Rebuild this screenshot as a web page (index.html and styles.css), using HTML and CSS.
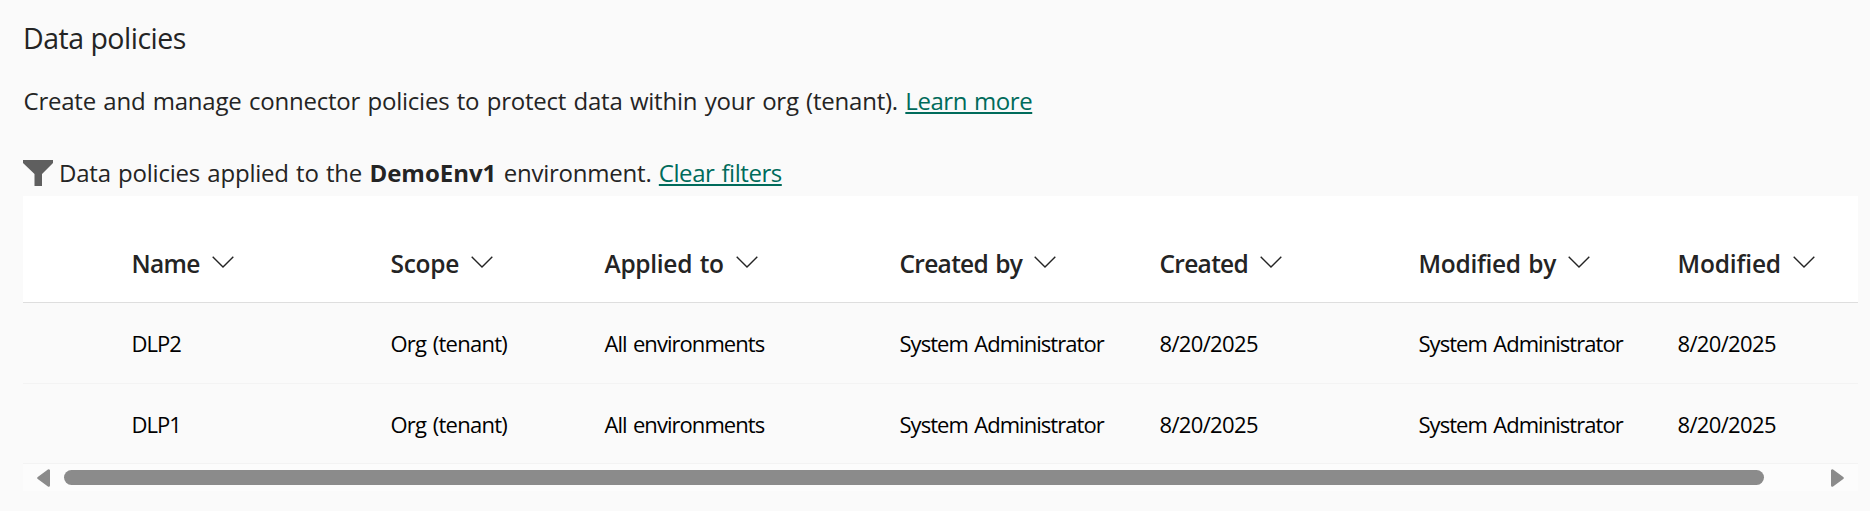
FILE: index.html
```html
<!DOCTYPE html>
<html lang="en">
<head>
<meta charset="utf-8">
<title>Data policies</title>
<link rel="stylesheet" href="styles.css">
</head>
<body>
<svg class="defs" width="0" height="0" aria-hidden="true">
  <symbol id="chevron" viewBox="0 0 22 12"><path d="M0.7 0.7 L11 11 L21.3 0.7" fill="none" stroke="currentColor" stroke-width="1.4"/></symbol>
</svg>
<main class="page">
  <h1 class="title">Data policies</h1>
  <p class="intro">Create and manage connector policies to protect data within your org (tenant). <a class="link" href="#">Learn more</a></p>
  <div class="filter">
    <svg class="funnel" viewBox="0 0 30 26"><path d="M0 0H30V3L19 14V26H11.500V14L0 3Z" fill="#5f5f5f"/></svg>
    <p class="filter-text">Data policies applied to the <b class="env">DemoEnv1</b> environment. <a class="link" href="#">Clear filters</a></p>
  </div>
  <section class="grid">
    <div class="row head">
      <div class="cell snug"><span>Name</span><svg class="chev"><use href="#chevron"/></svg></div>
      <div class="cell"><span>Scope</span><svg class="chev"><use href="#chevron"/></svg></div>
      <div class="cell"><span>Applied to</span><svg class="chev"><use href="#chevron"/></svg></div>
      <div class="cell snug"><span>Created by</span><svg class="chev"><use href="#chevron"/></svg></div>
      <div class="cell snug"><span>Created</span><svg class="chev"><use href="#chevron"/></svg></div>
      <div class="cell"><span>Modified by</span><svg class="chev"><use href="#chevron"/></svg></div>
      <div class="cell loose"><span>Modified</span><svg class="chev"><use href="#chevron"/></svg></div>
    </div>
    <div class="row">
      <div class="cell">DLP2</div><div class="cell scope">Org (tenant)</div><div class="cell">All environments</div><div class="cell">System Administrator</div><div class="cell date">8/20/2025</div><div class="cell">System Administrator</div><div class="cell date">8/20/2025</div>
    </div>
    <div class="row last">
      <div class="cell">DLP1</div><div class="cell scope">Org (tenant)</div><div class="cell">All environments</div><div class="cell">System Administrator</div><div class="cell date">8/20/2025</div><div class="cell">System Administrator</div><div class="cell date">8/20/2025</div>
    </div>
    <div class="scrollbar">
      <svg class="arrow" viewBox="0 0 13 18"><path d="M11.700 1.500V16.500L1.500 9Z" fill="#8b8b8b" stroke="#8b8b8b" stroke-width="2.600" stroke-linejoin="round"/></svg>
      <div class="track"><div class="thumb"></div></div>
      <svg class="arrow" viewBox="0 0 13 18"><path d="M1.300 1.500V16.500L11.500 9Z" fill="#8b8b8b" stroke="#8b8b8b" stroke-width="2.600" stroke-linejoin="round"/></svg>
    </div>
  </section>
</main>
</body>
</html>
```
FILE: styles.css
```css
* { box-sizing: border-box; }
body {
  margin: 0;
  background: #fafafa;
  color: #242424;
  font-family: "Open Sans", "Noto Sans", sans-serif;
  overflow: hidden;
}
.defs { display: block; height: 0; }
.page { height: 511px; padding: 17px 12px 0 23px; }
.title { margin: 0; font-size: 28.5px; line-height: 42px; font-weight: 400; letter-spacing: -0.5px; }
.intro { margin: 24px 0 0; padding-left: 0.5px; font-size: 24px; line-height: 36px; letter-spacing: -0.22px; word-spacing: 1.35px; white-space: nowrap; }
.link { color: #006b5b; letter-spacing: -0.45px; text-decoration: underline; text-decoration-thickness: 2px; text-underline-offset: 2px; text-decoration-skip-ink: none; }
.filter { display: flex; height: 36px; margin-top: 36px; gap: 6px; }
.funnel { width: 30px; height: 26px; margin-top: 5px; }
.filter-text { margin: 0; font-size: 24px; line-height: 36px; letter-spacing: -0.22px; word-spacing: 1.3px; white-space: nowrap; }
.env { font-weight: 700; letter-spacing: 0; }
.grid { margin-top: 5px; }
.row {
  display: grid;
  grid-template-columns: 259px 214px 295px 260px 259px 259px 180px;
  align-items: center;
  height: 81px;
  padding-left: 108.5px;
  border-bottom: 1px solid #f3f3f3;
  color: #000;
  font-size: 22px;
  letter-spacing: -0.95px;
  word-spacing: 1.5px;
  white-space: nowrap;
}
.row.last { height: 80px; }
.scope { letter-spacing: -0.75px; }
.date { letter-spacing: -0.65px; }
.row.head {
  height: 107px;
  padding-top: 28px;
  background: #fff;
  border-bottom-color: #dedede;
  color: #242424;
  font-size: 24.5px;
  font-weight: 600;
  letter-spacing: -0.3px;
}
.head .cell { display: flex; align-items: center; gap: 12px; }
.head .snug { letter-spacing: -0.7px; }
.head .loose { letter-spacing: -0.15px; }
.chev { width: 22px; height: 12px; margin-top: -2px; color: #242424; flex: none; }
.scrollbar { display: flex; align-items: center; height: 27px; padding: 0 14px; background: #fcfcfc; }
.arrow { width: 13px; height: 18px; flex: none; }
.track { flex: 1; padding: 0 67px 0 14px; }
.thumb { height: 15px; border-radius: 7.5px; background: #8b8b8b; }
```
